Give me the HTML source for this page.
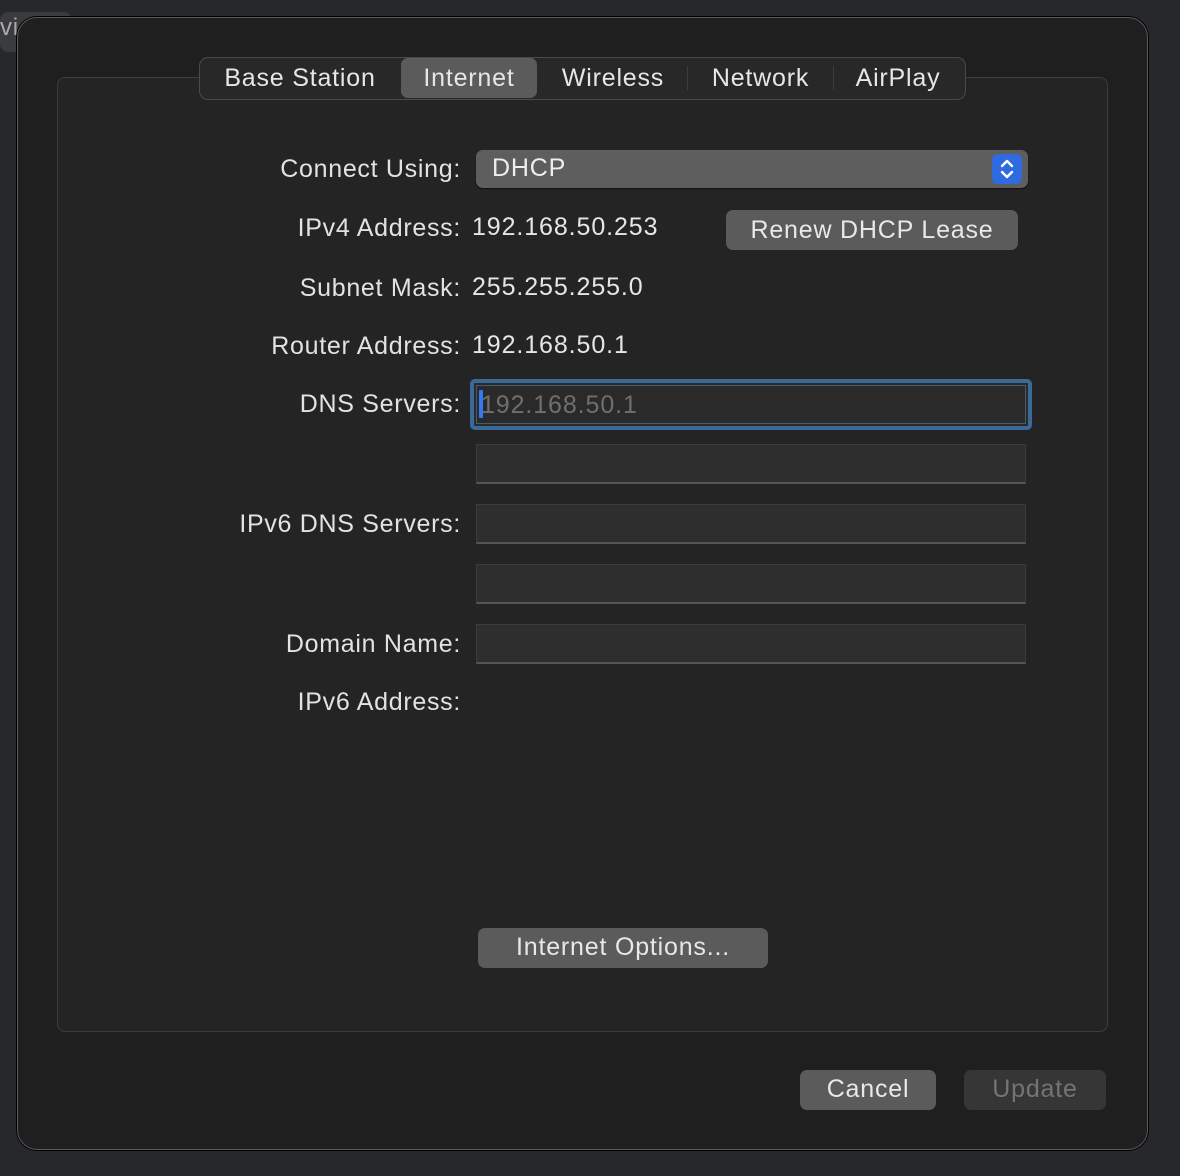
<!DOCTYPE html>
<html><head><meta charset="utf-8"><style>
*{margin:0;padding:0;box-sizing:border-box}
body{width:1180px;height:1176px;background:#26282c;font-family:"Liberation Sans",sans-serif;color:#e2e2e2;position:relative;overflow:hidden;letter-spacing:0.8px}
.a{position:absolute}
.dlg{left:17px;top:17px;width:1131px;height:1133px;background:#1f1f1f;border:1px solid #5a5a5a;border-radius:20px;box-shadow:0 0 0 1px #000}
.box{left:57px;top:77px;width:1051px;height:955px;background:#242424;border:1px solid #3d3d3d;border-radius:8px}
.tabs{left:199px;top:57px;width:767px;height:43px;background:#282828;border:1px solid #4a4a4a;border-radius:9px}
.tab{position:absolute;top:58px;height:40px;line-height:40px;font-size:25px;text-align:center;color:#e6e6e6}
.sel{background:#5b5b5b;border-radius:7px}
.sep{position:absolute;top:66px;width:1px;height:24px;background:#3c3c3c}
.lbl{position:absolute;right:719px;font-size:25px;color:#e2e2e2;white-space:nowrap;letter-spacing:0.7px}
.val{position:absolute;left:472px;font-size:25px;color:#e6e6e6;letter-spacing:0.9px}
.fld{position:absolute;left:476px;width:550px;height:40px;background:#2e2e2e;border:1px solid #3c3c3c;border-bottom:2px solid #555}
.btn{position:absolute;background:#5b5b5b;border-radius:7px;text-align:center;font-size:25px;color:#e8e8e8}
</style></head><body>
<div class="a" style="left:0;top:12px;width:72px;height:40px;background:#3a3b3e;border-radius:8px"></div>
<div class="a" style="left:0;top:14px;font-size:24px;color:#aaa">vi</div>
<div class="a dlg"></div>
<div class="a box"></div>
<div class="a tabs"></div>
<div class="tab" style="left:201px;width:198px">Base Station</div>
<div class="tab sel" style="left:401px;width:136px">Internet</div>
<div class="tab" style="left:539px;width:148px">Wireless</div>
<div class="sep" style="left:687px"></div>
<div class="tab" style="left:688px;width:145px">Network</div>
<div class="sep" style="left:833px"></div>
<div class="tab" style="left:834px;width:128px">AirPlay</div>

<div class="lbl" style="top:155px">Connect Using:</div>
<div class="a" style="left:476px;top:150px;width:552px;height:38px;background:#5e5e5e;border-radius:7px;box-shadow:0 1px 1px #111"></div>
<div class="a" style="left:492px;top:154px;font-size:25px;color:#eee">DHCP</div>
<div class="a" style="left:992px;top:154px;width:30px;height:30px;background:#2f6ae0;border-radius:6px">
<svg width="30" height="30" viewBox="0 0 30 30"><path d="M10 12 L15 7 L20 12 M10 18 L15 23 L20 18" stroke="#fff" stroke-width="2.4" fill="none" stroke-linecap="round" stroke-linejoin="round"/></svg></div>

<div class="lbl" style="top:214px">IPv4 Address:</div>
<div class="val" style="top:213px">192.168.50.253</div>
<div class="btn" style="left:726px;top:210px;width:292px;height:40px;line-height:40px">Renew DHCP Lease</div>

<div class="lbl" style="top:274px">Subnet Mask:</div>
<div class="val" style="top:273px">255.255.255.0</div>
<div class="lbl" style="top:332px">Router Address:</div>
<div class="val" style="top:331px">192.168.50.1</div>

<div class="lbl" style="top:390px">DNS Servers:</div>
<div class="a" style="left:470px;top:379px;width:562px;height:51px;border:4px solid #3c6a98;border-radius:5px;background:#2a2a2a"></div>
<div class="a" style="left:476px;top:385px;width:550px;height:39px;border:1px solid #4a5a6a"></div>
<div class="a" style="left:479px;top:390px;width:4px;height:28px;background:#3478f6;border-radius:1px"></div>
<div class="a" style="left:481px;top:391px;font-size:25px;color:#6f6f6f;letter-spacing:0.9px">192.168.50.1</div>

<div class="fld" style="top:444px"></div>
<div class="lbl" style="top:510px">IPv6 DNS Servers:</div>
<div class="fld" style="top:504px"></div>
<div class="fld" style="top:564px"></div>
<div class="lbl" style="top:630px">Domain Name:</div>
<div class="fld" style="top:624px"></div>
<div class="lbl" style="top:688px">IPv6 Address:</div>

<div class="btn" style="left:478px;top:928px;width:290px;height:40px;line-height:38px">Internet Options...</div>
<div class="btn" style="left:800px;top:1070px;width:136px;height:40px;line-height:38px">Cancel</div>
<div class="btn" style="left:964px;top:1070px;width:142px;height:40px;line-height:38px;background:#363636;color:#747474">Update</div>
</body></html>
